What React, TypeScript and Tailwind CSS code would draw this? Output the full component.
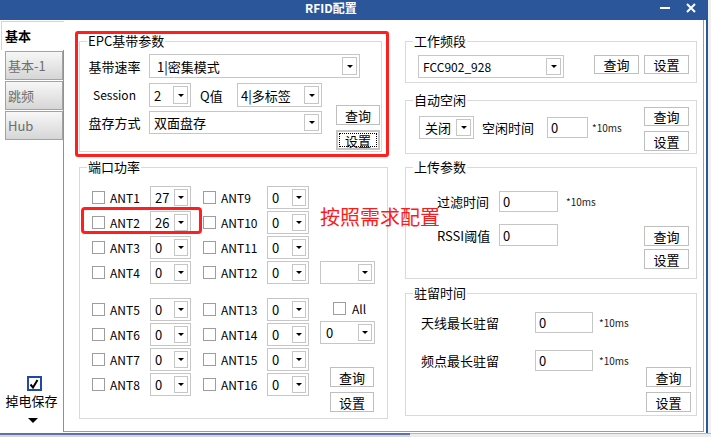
import React from 'react';

const Arrow: React.FC = () => (
  <span className="w-0 h-0 border-x-[3px] border-x-transparent border-t-[3px] border-t-black" />
);

const Combo: React.FC<{ className: string; text?: string; pad?: string; btn?: string }> = ({
  className,
  text = '',
  pad = 'pl-[5px]',
  btn = 'w-[15px]',
}) => (
  <div className={`flex items-center border border-[#c6c6c6] bg-white shrink-0 ${className}`}>
    <span className={`flex-1 text-[13px] leading-none whitespace-nowrap ${pad}`}>{text}</span>
    <span className={`flex items-center justify-center self-stretch my-[2px] mr-[2px] border border-[#c6c6c6] bg-white ${btn}`}>
      <Arrow />
    </span>
  </div>
);

const Btn: React.FC<{ className: string; children: React.ReactNode; focused?: boolean }> = ({
  className,
  children,
  focused,
}) => (
  <div
    className={`flex items-center justify-center bg-white text-[13px] leading-none shrink-0 ${
      focused
        ? 'border-2 border-[#c4c4c4] outline-1 outline-dotted outline-black outline-offset-[-4px]'
        : 'border border-[#bfbfbf]'
    } ${className}`}
  >
    {children}
  </div>
);

const Check: React.FC<{ className?: string }> = ({ className = '' }) => (
  <span className={`w-[13px] h-[13px] border border-[#9d9d9d] bg-white shrink-0 ${className}`} />
);

const Field: React.FC<{ className: string }> = ({ className }) => (
  <div className={`flex items-center border border-[#c6c6c6] bg-white pl-[3px] text-[13px] leading-none shrink-0 ${className}`}>
    0
  </div>
);

const Group: React.FC<{ title: string; className: string; children: React.ReactNode }> = ({
  title,
  className,
  children,
}) => (
  <fieldset className={`border border-[#d9d9d9] shrink-0 ${className}`}>
    <legend className="ml-[7px] px-[1px] text-[13px] leading-[14px]">{title}</legend>
    {children}
  </fieldset>
);

const AntRow: React.FC<{ a: number; av: string; b: number; bv: string }> = ({ a, av, b, bv }) => (
  <div className="flex items-center h-[23px]">
    <Check className="ml-[12px]" />
    <span className="ml-[5px] w-[40px] text-[12px] leading-none">ANT{a}</span>
    <Combo className="w-[41px] h-[23px]" text={av} pad="pl-[4px]" btn="w-[14px]" />
    <Check className="ml-[12px]" />
    <span className="ml-[5px] w-[46px] text-[12px] leading-none">ANT{b}</span>
    <Combo className="w-[42px] h-[23px]" text={bv} pad="pl-[4px]" btn="w-[14px]" />
  </div>
);

const Ms: React.FC<{ className: string }> = ({ className }) => (
  <span className={`text-[10px] leading-none text-[#222] ${className}`}>*10ms</span>
);

const App: React.FC = () => {
  return (
    <div className="relative w-[711px] h-[437px] overflow-hidden flex flex-col bg-[#f0f0f0] text-black font-['Noto_Sans_CJK_SC',sans-serif]">
      <div className="flex h-[433px]">
        {/* window */}
        <div className="w-[708px] flex flex-col bg-white border-r-2 border-[#2b579a]">
          {/* title bar */}
          <div className="h-[20px] flex items-center pb-[4px] bg-[#2b579a] text-white">
            <span className="ml-[305px] text-[12px] font-bold leading-[16px]">RFID配置</span>
            <div className="ml-auto mr-[10px] flex items-center">
              <svg width="10" height="10" viewBox="0 0 10 10">
                <rect x="0" y="4" width="10" height="2" fill="white" />
              </svg>
              <svg className="ml-[16px]" width="10" height="10" viewBox="0 0 10 10">
                <path d="M1 1 L9 9 M9 1 L1 9" stroke="white" strokeWidth="2" />
              </svg>
            </div>
          </div>

          <div className="flex h-[412px]">
            {/* tab strip */}
            <div className="w-[64px] flex flex-col">
              <div className="h-[29px] mt-[1px] ml-[1px] border-l border-t border-[#d4d4d4] flex items-center pl-[3px] text-[13px] font-bold">
                基本
              </div>
              <div className="flex-1 flex flex-col border-r border-[#8f8f9e]">
                {['基本-1', '跳频', 'Hub'].map((t) => (
                  <div
                    key={t}
                    className="mt-[1px] ml-[5px] w-[58px] h-[29px] flex items-center pl-[2px] border border-[#a3a3a3] bg-gradient-to-b from-[#f7f7f7] to-[#d6d6d6] text-[13px] text-[#6e6e6e]"
                  >
                    {t}
                  </div>
                ))}
                <div className="flex-1" />
                <div className="flex flex-col items-center pb-[9px]">
                  <span className="ml-[5px] w-[15px] h-[15px] border-2 border-[#1d4aa6] bg-white flex items-center justify-center">
                    <svg width="10" height="10" viewBox="0 0 10 10">
                      <path d="M1.5 5.5 L4 8.5 L8.5 1" stroke="black" strokeWidth="2" fill="none" />
                    </svg>
                  </span>
                  <span className="mt-[3px] text-[13px] leading-[14px]">掉电保存</span>
                  <span className="mt-[10px] ml-[3px] w-0 h-0 border-x-[5px] border-x-transparent border-t-[5px] border-t-black" />
                </div>
              </div>
            </div>

            {/* tab page */}
            <div className="w-[640px] flex border-r border-b border-[#9a9aa8]">
              {/* left column */}
              <div className="ml-[11px] w-[314px] flex flex-col pt-[11px]">
                <div className="w-[314px] h-[126px] border-[3px] border-[#ff1f1f] rounded-[3px]">
                  <Group title="EPC基带参数" className="ml-[1px] w-[303px] h-[118px]">
                    <div className="flex flex-col pt-[6px]">
                      <div className="flex items-center">
                        <span className="w-[69px] text-center text-[13px] leading-none">基带速率</span>
                        <Combo className="w-[211px] h-[24px]" text="1|密集模式" pad="pl-[7px]" />
                      </div>
                      <div className="flex mt-[5px]">
                        <div className="flex flex-col gap-[4px]">
                          <div className="flex items-center h-[24px]">
                            <span className="w-[69px] text-center text-[12px] leading-none">Session</span>
                            <Combo className="w-[42px] h-[24px]" text="2" pad="pl-[4px]" />
                            <span className="w-[46px] pl-[9px] text-[13px] leading-none">Q值</span>
                            <Combo className="w-[85px] h-[24px]" text="4|多标签" pad="pl-[3px]" />
                          </div>
                          <div className="flex items-center h-[23px]">
                            <span className="w-[69px] text-center text-[13px] leading-none">盘存方式</span>
                            <Combo className="w-[173px] h-[23px]" text="双面盘存" pad="pl-[4px]" />
                          </div>
                        </div>
                        <div className="flex flex-col ml-[14px] pt-[22px] gap-[5px]">
                          <Btn className="w-[44px] h-[20px]">查询</Btn>
                          <Btn className="w-[44px] h-[20px]" focused>
                            设置
                          </Btn>
                        </div>
                      </div>
                    </div>
                  </Group>
                </div>

                <Group title="端口功率" className="mt-[3px] ml-[4px] w-[309px] h-[259px]">
                  <div className="flex">
                    <div className="flex flex-col pt-[12px] gap-[14px]">
                      <div className="flex flex-col gap-[2px]">
                        <AntRow a={1} av="27" b={9} bv="0" />
                        <AntRow a={2} av="26" b={10} bv="0" />
                        <AntRow a={3} av="0" b={11} bv="0" />
                        <AntRow a={4} av="0" b={12} bv="0" />
                      </div>
                      <div className="flex flex-col gap-[2px]">
                        <AntRow a={5} av="0" b={13} bv="0" />
                        <AntRow a={6} av="0" b={14} bv="0" />
                        <AntRow a={7} av="0" b={15} bv="0" />
                        <AntRow a={8} av="0" b={16} bv="0" />
                      </div>
                    </div>
                    <div className="flex flex-col ml-[11px] w-[55px]">
                      <Combo className="mt-[87px] w-[55px] h-[23px]" btn="w-[14px]" />
                      <div className="mt-[18px] h-[13px] pl-[13px] flex items-center">
                        <Check />
                        <span className="ml-[6px] text-[12px] leading-none">All</span>
                      </div>
                      <Combo className="mt-[6px] w-[55px] h-[23px]" text="0" pad="pl-[5px]" btn="w-[14px]" />
                      <Btn className="mt-[23px] ml-[10px] w-[44px] h-[20px]">查询</Btn>
                      <Btn className="mt-[5px] ml-[10px] w-[44px] h-[20px]">设置</Btn>
                    </div>
                  </div>
                </Group>
              </div>

              {/* right column */}
              <div className="ml-[16px] w-[292px] flex flex-col pt-[14px]">
                <Group title="工作频段" className="w-[292px] h-[49px]">
                  <div className="flex items-start mt-[7px]">
                    <Combo className="ml-[12px] w-[146px] h-[23px]" text="FCC902_928" pad="pl-[4px] !text-[12px]" />
                    <Btn className="ml-[30px] w-[45px] h-[19px]">查询</Btn>
                    <Btn className="ml-[5px] w-[45px] h-[19px]">设置</Btn>
                  </div>
                </Group>

                <Group title="自动空闲" className="mt-[10px] w-[292px] h-[61px]">
                  <div className="flex justify-between">
                    <div className="flex items-center mt-[9px] h-[23px]">
                      <Combo className="ml-[13px] w-[55px] h-[23px]" text="关闭" pad="pl-[5px]" />
                      <span className="ml-[8px] w-[65px] text-[13px] leading-none">空闲时间</span>
                      <Field className="w-[41px] h-[21px]" />
                      <Ms className="ml-[4px]" />
                    </div>
                    <div className="flex flex-col gap-[5px] mr-[7px]">
                      <Btn className="w-[45px] h-[19px]">查询</Btn>
                      <Btn className="w-[45px] h-[20px]">设置</Btn>
                    </div>
                  </div>
                </Group>

                <Group title="上传参数" className="mt-[6px] w-[292px] h-[119px]">
                  <div className="flex justify-between">
                    <div className="flex flex-col pt-[17px]">
                      <div className="flex items-center h-[21px]">
                        <span className="ml-[31px] w-[62px] text-[13px] leading-none">过滤时间</span>
                        <Field className="w-[59px] h-[21px]" />
                        <Ms className="ml-[8px]" />
                      </div>
                      <div className="flex items-center h-[22px] mt-[12px]">
                        <span className="ml-[31px] w-[62px] text-[13px] leading-none">RSSI阈值</span>
                        <Field className="w-[59px] h-[22px]" />
                      </div>
                    </div>
                    <div className="flex flex-col mt-[52px] gap-[3px] mr-[7px]">
                      <Btn className="w-[45px] h-[20px]">查询</Btn>
                      <Btn className="w-[45px] h-[20px]">设置</Btn>
                    </div>
                  </div>
                </Group>

                <Group title="驻留时间" className="mt-[7px] w-[292px] h-[130px]">
                  <div className="flex justify-between">
                    <div className="flex flex-col pt-[12px]">
                      <div className="flex items-center h-[21px]">
                        <span className="ml-[15px] w-[114px] text-[13px] leading-none">天线最长驻留</span>
                        <Field className="w-[58px] h-[21px]" />
                        <Ms className="ml-[6px]" />
                      </div>
                      <div className="flex items-center h-[21px] mt-[17px]">
                        <span className="ml-[15px] w-[114px] text-[13px] leading-none">频点最长驻留</span>
                        <Field className="w-[58px] h-[21px]" />
                        <Ms className="ml-[6px]" />
                      </div>
                    </div>
                    <div className="flex flex-col mt-[67px] gap-[5px] mr-[5px]">
                      <Btn className="w-[45px] h-[20px]">查询</Btn>
                      <Btn className="w-[45px] h-[20px]">设置</Btn>
                    </div>
                  </div>
                </Group>
              </div>
            </div>
          </div>
        </div>
        <div className="flex-1 bg-[#f0f0f0]" />
      </div>

      {/* desktop strip under the window */}
      <div className="flex h-[4px]">
        <div className="w-[410px] bg-[#cfd5e2] border-t-2 border-[#5f73a0]" />
        <div className="flex-1 bg-[#ececec] border-t border-[#b8b8b8]" />
      </div>

      {/* annotations */}
      <div className="absolute left-[81px] top-[207px] w-[121px] h-[27px] border-[3px] border-[#ff1f1f] rounded-[4px]" />
      <span className="absolute left-[320px] top-[206px] text-[20px] leading-[22px] text-[#ff1a1a]">按照需求配置</span>
    </div>
  );
};

export default App;
